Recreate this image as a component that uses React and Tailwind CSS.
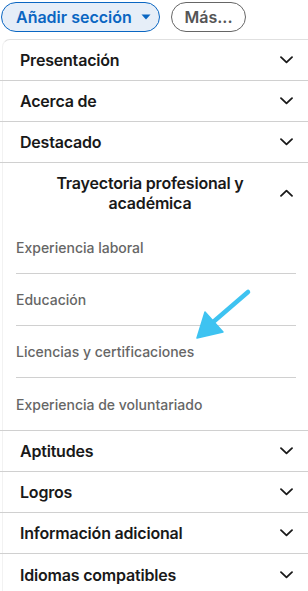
import React from "react";

const Chevron = ({ up }) => (
  <svg width="13" height="8" viewBox="0 0 13 8" className="shrink-0">
    <path
      d={up ? "M1 6.8L6.5 1.6L12 6.8" : "M1 1.2L6.5 6.4L12 1.2"}
      fill="none"
      stroke="#191919"
      strokeWidth="1.8"
      strokeLinecap="round"
      strokeLinejoin="round"
    />
  </svg>
);

const MainRow = ({ label, border = true }) => (
  <div className={`flex items-center h-[41px] pl-5 pr-[15px] ${border ? "border-b border-[#d0d0d0]" : ""}`}>
    <span className="flex-1 text-[16px] font-semibold text-[#191919] tracking-[-0.2px]">{label}</span>
    <Chevron />
  </div>
);

const SubRow = ({ label, border = true }) => (
  <div className={`flex items-center h-[52px] ${border ? "border-b border-[#d0d0d0]" : ""}`}>
    <span className="text-[14px] font-medium text-[#666666]">{label}</span>
  </div>
);

export default function App() {
  return (
    <div
      className="w-[308px] h-[591px] bg-white overflow-hidden relative"
      style={{ fontFamily: "Inter, 'Noto Sans', sans-serif" }}
    >
      <div className="flex items-center gap-[11px] pt-[2px] pl-[1px]">
        <button className="flex items-center gap-[9px] h-[30px] w-[159px] pl-[14px] rounded-full border-[1.5px] border-[#0a66c2] bg-[#e6eef8] text-[#0a66c2] text-[16px] font-semibold">
          <span>Añadir sección</span>
          <svg width="10" height="6" viewBox="0 0 10 6">
            <path d="M0.5 0.5H9.5L5 5.5Z" fill="#0a66c2" />
          </svg>
        </button>
        <button className="flex items-center justify-center h-[30px] w-[75px] rounded-full border border-[#666666] text-[#555555] text-[16px] font-semibold">
          Más...
        </button>
      </div>

      <div className="mt-[7px] ml-[2px] border-t border-l border-t-[#e0e0e0] border-l-[#f2f2f2] rounded-tl-[8px]">
        <div className="-ml-[3px]">
          <MainRow label="Presentación" />
          <MainRow label="Acerca de" />
          <MainRow label="Destacado" />

          <div className="border-b border-[#d0d0d0]">
            <div className="flex items-center pl-5 pr-[15px] pt-[10px] pb-[9px]">
              <span className="flex-1 text-center text-[16px] leading-[20px] font-semibold text-[#191919] tracking-[-0.2px]">
                Trayectoria profesional y
                <br />
                académica
              </span>
              <Chevron up />
            </div>
            <div className="ml-4 mr-3">
              <SubRow label="Experiencia laboral" />
              <SubRow label="Educación" />
              <SubRow label="Licencias y certificaciones" />
              <SubRow label="Experiencia de voluntariado" border={false} />
            </div>
          </div>

          <MainRow label="Aptitudes" />
          <MainRow label="Logros" />
          <MainRow label="Información adicional" />
          <MainRow label="Idiomas compatibles" border={false} />
        </div>
      </div>

      <svg
        className="absolute left-0 top-0 pointer-events-none"
        width="308"
        height="591"
        viewBox="0 0 308 591"
      >
        <line x1="248" y1="292" x2="212" y2="323" stroke="#3ec3f1" strokeWidth="4.5" strokeLinecap="round" />
        <polygon points="197,338 205,312 223,332" fill="#3ec3f1" stroke="#3ec3f1" strokeWidth="1.5" strokeLinejoin="round" />
      </svg>
    </div>
  );
}
